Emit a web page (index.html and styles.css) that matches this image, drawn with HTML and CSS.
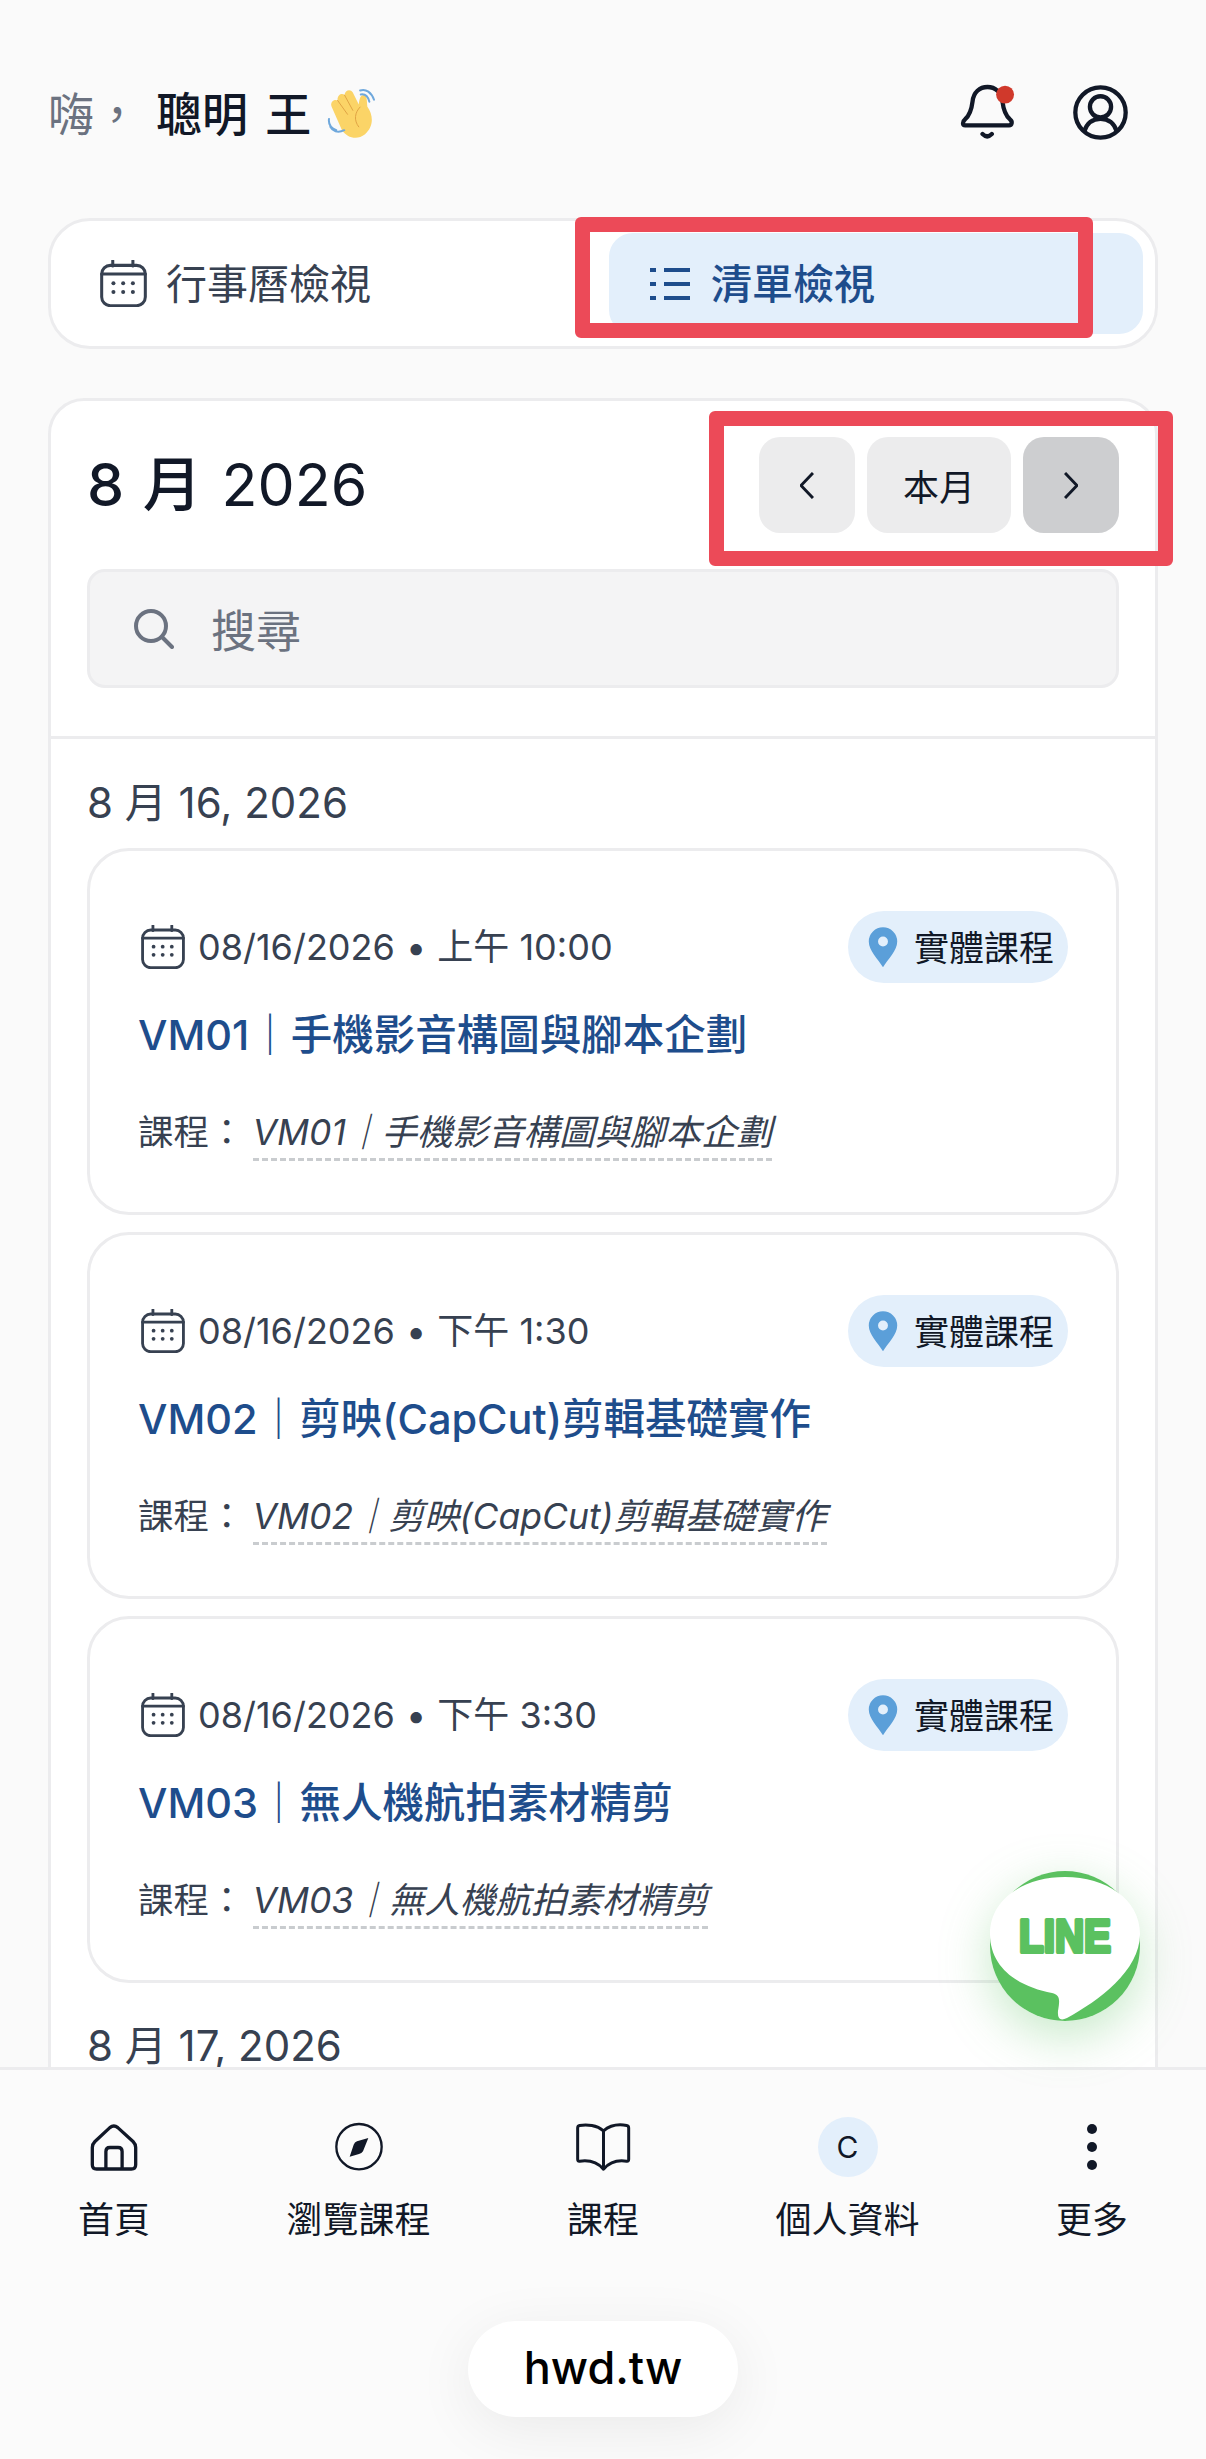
FILE: index.html
```html
<!DOCTYPE html>
<html lang="zh-Hant">
<head>
  <meta charset="UTF-8" />
  <meta name="viewport" content="width=device-width, initial-scale=1.0" />
  <title>行事曆</title>
  <link rel="stylesheet" href="styles.css">
</head>
<body>
  <svg class="defs" width="0" height="0">
    <symbol id="calendar" viewBox="30 36 140 140">
      <rect x="35" y="52" width="130" height="120" rx="26" fill="none" stroke="currentColor" stroke-width="9" />
      <path d="M35 78H165M68 38V54M128 38V54" fill="none" stroke="currentColor" stroke-width="9" stroke-linecap="round" />
      <g fill="currentColor">
        <circle cx="70" cy="105" r="6" /><circle cx="99" cy="105" r="6" /><circle cx="128" cy="105" r="6" />
        <circle cx="70" cy="131" r="6" /><circle cx="99" cy="131" r="6" /><circle cx="128" cy="131" r="6" />
      </g>
    </symbol>
    <symbol id="pin" viewBox="50 48 90 124">
      <path fill-rule="evenodd" d="M95 170C80 145 52 120 52 92A43 43 0 0 1 138 92C138 120 110 145 95 170ZM95 77A15 15 0 1 0 95 107A15 15 0 1 0 95 77Z" />
    </symbol>
  </svg>

  <main class="content">
    <header class="topbar">
      <div class="greeting">
        <span class="hi">嗨，</span>
        <span class="name">聰明 王</span>
        <svg class="wave" viewBox="50 20 145 165">
          <path fill="#fbd467" d="M64 85C58 72 72 60 82 66C80 50 95 42 103 50C104 36 120 30 128 42L146 78C148 60 152 48 162 50C172 52 170 70 172 85C190 110 192 145 165 168C140 188 110 178 95 155Z" />
          <path fill="none" stroke="#e0a344" stroke-width="3" stroke-linecap="round" d="M82 66L112 108M103 50L128 96M150 86C134 102 130 126 146 146" />
          <path fill="none" stroke="#6fa8dc" stroke-width="6" stroke-linecap="round" d="M150 36C168 30 184 42 192 64M152 48C164 46 174 54 178 70M56 122C54 138 62 150 78 156M60 146C66 158 82 166 102 156" />
        </svg>
      </div>
      <div class="top-icons">
        <svg class="bell" viewBox="60 40 170 175">
          <path fill="none" stroke="#111827" stroke-width="13" stroke-linejoin="round" d="M75 168H207C216 168 218 156 210 150C196 138 190 120 187 95C184 68 165 52 142 52C118 52 100 68 97 95C94 120 88 138 74 150C66 156 66 168 75 168Z" />
          <path fill="none" stroke="#111827" stroke-width="13" stroke-linecap="round" d="M127 194Q141 208 155 194" />
          <circle cx="195" cy="75" r="27" fill="#d0392b" />
        </svg>
        <svg class="profile" viewBox="400 46 166 166" fill="none" stroke="#111827" stroke-width="13">
          <circle cx="483" cy="129" r="76" />
          <circle cx="483" cy="112" r="32" />
          <path d="M434 186C442 160 460 148 483 148C506 148 524 160 532 186" />
        </svg>
      </div>
    </header>

    <div class="tabs">
      <div class="tab">
        <svg class="tab-icon"><use href="#calendar" /></svg>
        <span class="tab-label">行事曆檢視</span>
      </div>
      <div class="tab active">
        <svg class="list-icon" viewBox="0 0 40 32" fill="none" stroke="currentColor" stroke-width="4">
          <path d="M0 2H6M14 2H40M0 16H6M14 16H40M0 30H6M14 30H40" />
        </svg>
        <span class="tab-label">清單檢視</span>
      </div>
    </div>

    <section class="panel">
      <div class="panel-head">
        <div class="month-row">
          <h1 class="month"><b>8 月</b> 2026</h1>
          <div class="pager">
            <button class="page-btn">
              <svg width="14" height="27" viewBox="0 0 14 27" fill="none" stroke="#111827" stroke-width="3"><path d="M13 1L1 13.5L13 26" /></svg>
            </button>
            <button class="page-btn today">本月</button>
            <button class="page-btn next">
              <svg width="14" height="27" viewBox="0 0 14 27" fill="none" stroke="#111827" stroke-width="3"><path d="M1 1L13 13.5L1 26" /></svg>
            </button>
          </div>
        </div>
        <div class="search">
          <svg width="40" height="40" viewBox="0 0 40 40" fill="none" stroke="#6b7280" stroke-width="4" stroke-linecap="round">
            <circle cx="17" cy="17" r="15" /><path d="M28 28L38 38" />
          </svg>
          <span>搜尋</span>
        </div>
      </div>

      <div class="agenda">
        <h2 class="day">8 月 16, 2026</h2>
        <div class="events">
          <article class="event">
            <div class="event-top">
              <div class="when">
                <svg class="when-icon"><use href="#calendar" /></svg>
                <span class="when-text">08/16/2026 <b class="sep">•</b> 上午 10:00</span>
              </div>
              <div class="badge"><svg class="pin"><use href="#pin" /></svg><span class="badge-text">實體課程</span></div>
            </div>
            <h3 class="event-title">VM01｜手機影音構圖與腳本企劃</h3>
            <p class="course">課程： <em>VM01｜手機影音構圖與腳本企劃</em></p>
          </article>

          <article class="event">
            <div class="event-top">
              <div class="when">
                <svg class="when-icon"><use href="#calendar" /></svg>
                <span class="when-text">08/16/2026 <b class="sep">•</b> 下午 1:30</span>
              </div>
              <div class="badge"><svg class="pin"><use href="#pin" /></svg><span class="badge-text">實體課程</span></div>
            </div>
            <h3 class="event-title">VM02｜剪映(CapCut)剪輯基礎實作</h3>
            <p class="course">課程： <em>VM02｜剪映(CapCut)剪輯基礎實作</em></p>
          </article>

          <article class="event">
            <div class="event-top">
              <div class="when">
                <svg class="when-icon"><use href="#calendar" /></svg>
                <span class="when-text">08/16/2026 <b class="sep">•</b> 下午 3:30</span>
              </div>
              <div class="badge"><svg class="pin"><use href="#pin" /></svg><span class="badge-text">實體課程</span></div>
            </div>
            <h3 class="event-title">VM03｜無人機航拍素材精剪</h3>
            <p class="course">課程： <em>VM03｜無人機航拍素材精剪</em></p>
          </article>
        </div>
        <h2 class="day next-day">8 月 17, 2026</h2>
      </div>
    </section>
  </main>

  <footer class="bottom">
    <nav class="nav">
      <div class="nav-item">
        <div class="nav-icon">
          <svg width="48" height="47" viewBox="60 40 145 140" fill="none" stroke="#111827" stroke-width="10" stroke-linejoin="round">
            <path d="M75 92L120 50Q132 40 144 50L190 92Q198 100 198 110V162Q198 175 185 175H80Q67 175 67 162V110Q67 100 75 92Z" />
            <path d="M108 175V122Q108 110 120 110H145Q157 110 157 122V175" />
          </svg>
        </div>
        首頁
      </div>
      <div class="nav-item">
        <div class="nav-icon">
          <svg width="50" height="50" viewBox="795 36 150 150">
            <circle cx="870" cy="110" r="68" fill="none" stroke="#111827" stroke-width="7" />
            <path fill="#111827" d="M898 84L882 124Q878 130 870 132L842 140L854 104Q857 96 864 94Z" />
          </svg>
        </div>
        瀏覽課程
      </div>
      <div class="nav-item">
        <div class="nav-icon">
          <svg width="57" height="50" viewBox="44 36 172 150" fill="none" stroke="#111827" stroke-width="9" stroke-linejoin="round">
            <path d="M130 62C110 45 80 42 58 46Q52 47 52 54V148Q52 155 58 154C85 150 110 155 130 178C150 155 175 150 200 154Q206 155 206 148V54Q206 47 200 46C178 42 150 45 130 62ZM130 62V178" />
          </svg>
        </div>
        課程
      </div>
      <div class="nav-item">
        <div class="nav-icon"><span class="avatar">C</span></div>
        個人資料
      </div>
      <div class="nav-item">
        <div class="nav-icon">
          <svg width="12" height="48" viewBox="0 0 12 48" fill="#111827">
            <circle cx="6" cy="6" r="5" /><circle cx="6" cy="24" r="5" /><circle cx="6" cy="42" r="5" />
          </svg>
        </div>
        更多
      </div>
    </nav>
    <div class="address">hwd.tw</div>
  </footer>

  <!-- floating chat button -->
  <div class="line-btn">
    <svg width="150" height="150" viewBox="0 0 150 150">
      <circle cx="75" cy="75" r="75" fill="#5bc160" />
      <path fill="#fff" d="M0 63C0 28 34 6 75 6C116 6 150 28 150 63C150 100 108 130 77 147Q67 152 68 140C70 128 70 124 62 122C30 116 0 98 0 63Z" />
      <text x="75" y="81" text-anchor="middle" textLength="92" lengthAdjust="spacingAndGlyphs" class="line-text">LINE</text>
    </svg>
  </div>

  <!-- highlight frames -->
  <div class="mark mark-tab"></div>
  <div class="mark mark-pager"></div>
</body>
</html>
```

FILE: styles.css
```css
* {
  box-sizing: border-box;
}

body {
  margin: 0;
  height: 100vh;
  display: flex;
  flex-direction: column;
  overflow: hidden;
  position: relative;
  background-color: #fafafa;
  color: #111827;
  font-family: Inter, "Noto Sans CJK TC", sans-serif;
}

.defs {
  position: absolute;
}

.content {
  flex: 1;
  min-height: 0;
  overflow: hidden;
  padding: 76px 48px 0;
}

/* greeting row */
.topbar {
  display: flex;
  align-items: center;
  justify-content: space-between;
  height: 72px;
  padding-right: 30px;
  margin-bottom: 70px;
}

.greeting {
  display: flex;
  align-items: center;
  font-size: 46px;
}

.hi {
  color: #6b7280;
  margin-right: 16px;
  margin-bottom: 3px;
}

.name {
  font-weight: 500;
  margin-right: 16px;
  margin-bottom: 3px;
  word-spacing: 5px;
}

.wave {
  width: 48px;
  height: 55px;
}

.top-icons {
  display: flex;
  align-items: center;
  gap: 56px;
}

.bell {
  width: 57px;
  height: 58px;
}

.profile {
  width: 55px;
  height: 55px;
}

/* view switch */
.tabs {
  display: grid;
  grid-template-columns: 1fr 1fr;
  gap: 12px;
  height: 131px;
  padding: 12px;
  margin-bottom: 49px;
  background-color: #fff;
  border: 3px solid #ececee;
  border-radius: 42px;
}

.tab {
  display: flex;
  align-items: center;
  gap: 19px;
  padding-left: 37px;
  border-radius: 24px;
  color: #374151;
  font-size: 41px;
}

.tab-label {
  margin-bottom: 6px;
}

.tab.active {
  gap: 21px;
  padding-left: 41px;
  background-color: #e3effb;
  color: #1e4d8c;
  font-weight: 500;
}

.tab-icon {
  width: 47px;
  height: 47px;
}

.list-icon {
  width: 40px;
  height: 32px;
}

/* month panel */
.panel {
  background-color: #fff;
  border: 3px solid #ececee;
  border-radius: 36px;
  min-height: 2000px;
}

.panel-head {
  padding: 36px 36px 48px;
  border-bottom: 3px solid #ececee;
}

.month-row {
  display: flex;
  align-items: center;
  justify-content: space-between;
  margin-bottom: 36px;
}

.month {
  margin: 0 0 9px;
  font-size: 59px;
  font-weight: 400;
  word-spacing: 3px;
}

.month b {
  font-weight: 500;
}

.pager {
  display: flex;
  gap: 12px;
}

.page-btn {
  display: flex;
  align-items: center;
  justify-content: center;
  width: 96px;
  height: 96px;
  padding: 0;
  border: none;
  border-radius: 21px;
  background-color: #ececed;
  color: #111827;
  font-family: inherit;
  font-size: 36px;
}

.page-btn.today {
  width: 144px;
}

.page-btn.next {
  background-color: #cdced0;
}

.search {
  display: flex;
  align-items: center;
  gap: 37px;
  height: 119px;
  padding-left: 44px;
  background-color: #f4f4f5;
  border: 3px solid #ececee;
  border-radius: 18px;
  color: #6b7280;
  font-size: 45px;
}

/* agenda list */
.agenda {
  padding: 34px 36px 0;
}

.day {
  margin: 0 0 15px;
  color: #374151;
  font-size: 42px;
  font-weight: 400;
  line-height: 60px;
}

.next-day {
  margin-top: 33px;
}

.events {
  display: flex;
  flex-direction: column;
  gap: 17px;
}

.event {
  height: 367px;
  padding: 60px 48px 0;
  border: 3px solid #ececee;
  border-radius: 42px;
}

.event-top {
  display: flex;
  align-items: center;
  justify-content: space-between;
}

.when {
  display: flex;
  align-items: center;
  gap: 13px;
  color: #374151;
  font-size: 36px;
}

.when-icon {
  width: 44px;
  height: 44px;
  margin-left: 3px;
}

.when-text {
  margin-bottom: 6px;
}

.sep {
  margin: 0 1px;
  font-weight: 400;
}

.badge {
  display: flex;
  align-items: center;
  gap: 16px;
  height: 72px;
  padding: 0 14px 0 20px;
  background-color: #e3effb;
  border-radius: 36px;
  font-size: 35px;
}

.badge-text {
  margin-bottom: 4px;
}

.pin {
  width: 30px;
  height: 41px;
  fill: #5b9fd9;
}

.event-title {
  margin: 22px 0 2px;
  color: #1e4d8c;
  font-size: 41.5px;
  font-weight: 450;
  line-height: 60px;
  white-space: nowrap;
}

.course {
  margin: 43px 0 0;
  color: #374151;
  font-size: 35.5px;
  line-height: 50px;
  white-space: nowrap;
}

.course em {
  display: inline-block;
  margin-left: -2px;
  border-bottom: 3px dashed #c9cccf;
  line-height: 50px;
}

/* bottom navigation */
.bottom {
  height: 392px;
  flex-shrink: 0;
  position: relative;
  background-color: #fbfbfb;
  border-top: 3px solid #ececee;
}

.nav {
  display: flex;
  justify-content: space-between;
  padding: 47px 24px 0;
}

.nav-item {
  display: flex;
  flex-direction: column;
  align-items: center;
  width: 180px;
  font-size: 36px;
  line-height: 44px;
}

.nav-icon {
  display: flex;
  align-items: center;
  justify-content: center;
  height: 60px;
  margin-bottom: 21px;
}

.avatar {
  display: flex;
  align-items: center;
  justify-content: center;
  width: 60px;
  height: 60px;
  border-radius: 50%;
  background-color: #e3effb;
  font-size: 30px;
}

.address {
  display: flex;
  align-items: center;
  justify-content: center;
  width: 270px;
  height: 96px;
  margin: 79px auto 0;
  padding-bottom: 3px;
  background-color: #fff;
  border-radius: 48px;
  box-shadow: 0 12px 60px rgba(0, 0, 0, 0.07);
  color: #000;
  font-size: 45px;
  font-weight: 500;
}

.line-btn {
  position: absolute;
  left: 990px;
  top: 1871px;
  width: 150px;
  height: 150px;
  border-radius: 50%;
  box-shadow: 0 15px 50px rgba(91, 193, 96, 0.35);
}

.line-btn svg {
  display: block;
}

.line-text {
  fill: #5bc160;
  stroke: #5bc160;
  stroke-width: 4;
  stroke-linejoin: round;
  font-family: "Liberation Sans", sans-serif;
  font-size: 46px;
  font-weight: 700;
}

.mark {
  position: absolute;
  border: 15px solid #ec4a58;
  border-radius: 6px;
}

.mark-tab {
  left: 575px;
  top: 217px;
  width: 518px;
  height: 121px;
}

.mark-pager {
  left: 709px;
  top: 411px;
  width: 464px;
  height: 155px;
}
```
